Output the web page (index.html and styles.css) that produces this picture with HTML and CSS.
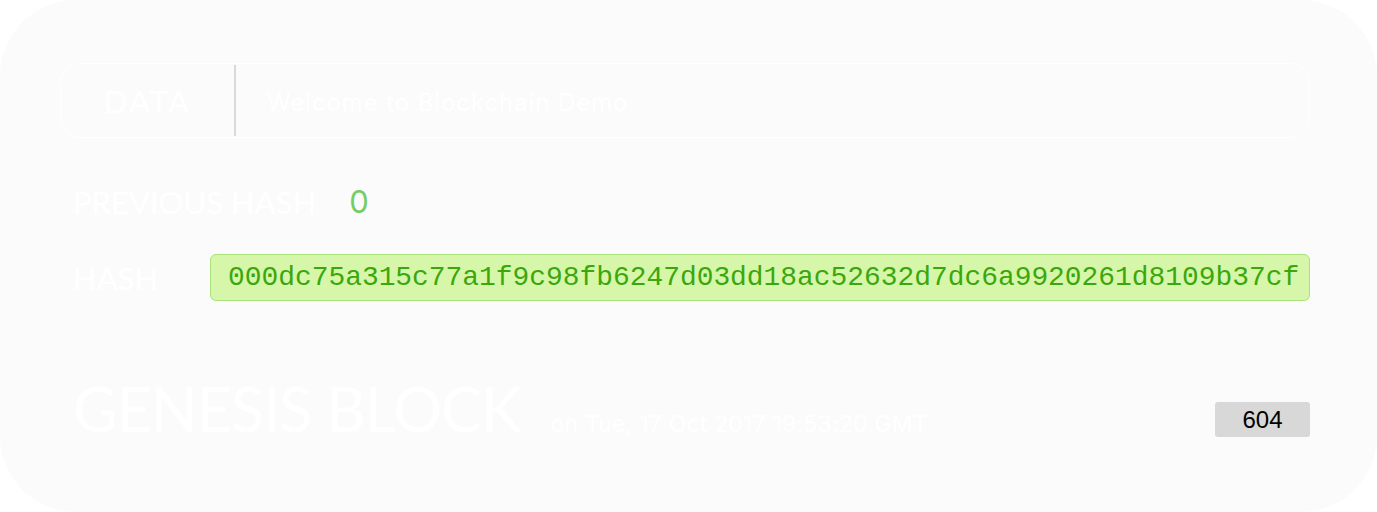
FILE: index.html
```html
<!DOCTYPE html>
<html>
<head>
<meta charset="utf-8">
<link rel="stylesheet" href="styles.css">
</head>
<body>
<div class="card">
  <div class="data-box">
    <div class="data-label">DATA</div>
    <div class="data-divider"></div>
    <div class="data-text">Welcome to Blockchain Demo</div>
  </div>
  <div class="row prev-row">
    <div class="label">PREVIOUS HASH</div>
    <div class="prev-value">0</div>
  </div>
  <div class="row hash-row">
    <div class="label hash-label">HASH</div>
    <div class="hash-box">000dc75a315c77a1f9c98fb6247d03dd18ac52632d7dc6a9920261d8109b37cf</div>
  </div>
  <div class="row genesis-row">
    <div class="genesis-title">GENESIS BLOCK</div>
    <div class="genesis-date">on Tue, 17 Oct 2017 19:53:20 GMT</div>
    <div class="nonce">604</div>
  </div>
</div>
</body>
</html>
```

FILE: styles.css
```css
html, body {
  margin: 0;
  padding: 0;
  background: #ffffff;
}
.card {
  box-sizing: border-box;
  width: 1377px;
  height: 512px;
  background: #fbfbfb;
  border-radius: 76px;
  padding: 63px 67px 0 60px;
  display: flex;
  flex-direction: column;
}
.data-box {
  box-sizing: border-box;
  height: 75px;
  display: flex;
  align-items: center;
  border: 1px solid #ffffff;
  border-radius: 20px;
}
.data-label {
  width: 173px;
  text-align: center;
  font-family: "Lato", sans-serif;
  font-size: 31px;
  letter-spacing: 2px;
  color: #ffffff;
}
.data-divider {
  width: 2px;
  align-self: stretch;
  margin: 1px 0;
  background: #d9d9d9;
}
.data-text {
  padding-left: 31px;
  padding-top: 3px;
  font-family: "Inter", sans-serif;
  font-size: 24px;
  letter-spacing: 0.9px;
  color: #ffffff;
}
.row {
  display: flex;
  align-items: center;
  padding-left: 13px;
}
.prev-row {
  height: 47px;
  margin-top: 40px;
}
.label {
  font-family: "Lato", sans-serif;
  font-size: 31px;
  color: #ffffff;
}
.prev-value {
  margin-left: 33px;
  font-family: "Inter", sans-serif;
  font-size: 31px;
  color: #76cc65;
}
.hash-row {
  height: 47px;
  margin-top: 29px;
}
.hash-label {
  width: 137px;
}
.hash-box {
  box-sizing: border-box;
  flex: 1;
  height: 47px;
  display: flex;
  align-items: center;
  padding-left: 17px;
  background: #d6f7a9;
  border: 1px solid #a9e27c;
  border-radius: 6px;
  font-family: "Liberation Mono", monospace;
  font-size: 27.9px;
  color: #3ca70d;
  white-space: nowrap;
  overflow: hidden;
}
.genesis-row {
  margin-top: 71px;
  align-items: baseline;
}
.genesis-title {
  font-family: "Lato", sans-serif;
  font-size: 61px;
  letter-spacing: -0.9px;
  color: #ffffff;
}
.genesis-date {
  margin-left: 30px;
  font-family: "Inter", sans-serif;
  font-size: 23px;
  letter-spacing: 0.2px;
  color: #ffffff;
}
.nonce {
  margin-left: auto;
  box-sizing: border-box;
  width: 95px;
  height: 35px;
  display: flex;
  align-items: center;
  justify-content: center;
  align-self: flex-end;
  margin-bottom: 8px;
  background: #d8d8d8;
  border-radius: 3px;
  font-family: "Liberation Sans", sans-serif;
  font-size: 24px;
  color: #000000;
}
```
